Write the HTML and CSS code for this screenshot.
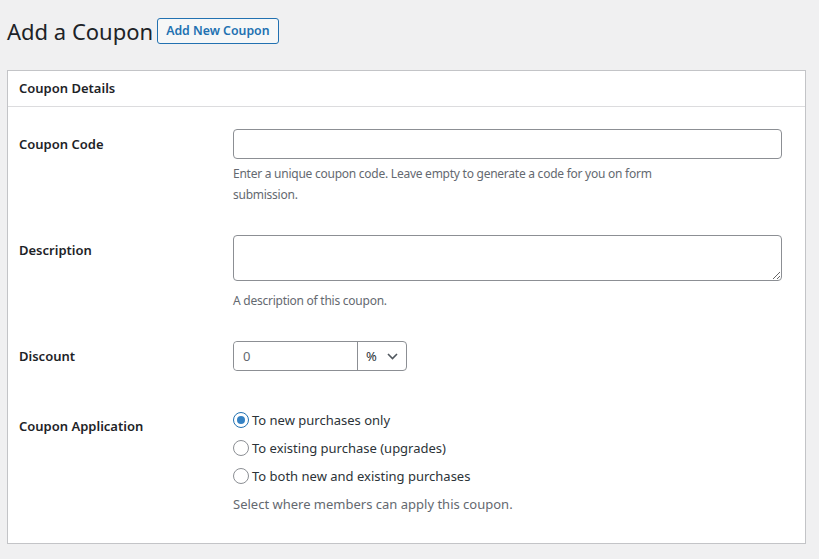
FILE: index.html
```html
<!DOCTYPE html>
<html lang="en">
<head>
    <meta charset="UTF-8">
    <meta name="viewport" content="width=device-width, initial-scale=1.0">
    <title>Add a Coupon</title>
    <link rel="stylesheet" href="styles.css">
</head>
<body>
    <div class="wrap">
        <div class="title-row">
            <h1>Add a Coupon</h1>
            <a href="#" class="title-action">Add New Coupon</a>
        </div>

        <div class="card">
            <h2 class="card-header">Coupon Details</h2>
            <div class="card-body">

                <!-- Coupon Code -->
                <div class="field-row">
                    <label class="field-label" for="couponCode">Coupon Code</label>
                    <div class="field-input">
                        <input type="text" id="couponCode" class="text-input">
                        <p class="description">Enter a unique coupon code. Leave empty to generate a code for you on form<br>submission.</p>
                    </div>
                </div>

                <!-- Description -->
                <div class="field-row">
                    <label class="field-label" for="couponDescription">Description</label>
                    <div class="field-input">
                        <textarea id="couponDescription" class="text-area"></textarea>
                        <p class="description">A description of this coupon.</p>
                    </div>
                </div>

                <!-- Discount -->
                <div class="field-row">
                    <label class="field-label" for="discountAmount">Discount</label>
                    <div class="field-input">
                        <div class="discount-group">
                            <input type="text" id="discountAmount" class="discount-amount" value="0">
                            <div class="discount-type">
                                <span>%</span>
                                <svg width="11" height="7" viewBox="0 0 11 7"><path d="M1 1l4.5 4.5L10 1" fill="none" stroke="#50575e" stroke-width="1.6"/></svg>
                            </div>
                        </div>
                    </div>
                </div>

                <!-- Coupon Application -->
                <div class="field-row">
                    <span class="field-label field-label-radio">Coupon Application</span>
                    <div class="field-input">
                        <fieldset class="radio-list">
                            <label class="radio-option"><input type="radio" name="application" value="new" checked> To new purchases only</label>
                            <label class="radio-option"><input type="radio" name="application" value="existing"> To existing purchase (upgrades)</label>
                            <label class="radio-option"><input type="radio" name="application" value="both"> To both new and existing purchases</label>
                        </fieldset>
                        <p class="description description-large">Select where members can apply this coupon.</p>
                    </div>
                </div>

            </div>
        </div>
    </div>
</body>
</html>
```

FILE: styles.css
```css
body {
    margin: 0;
    padding: 0;
    background-color: #f0f0f1;
    font-family: "Noto Sans", sans-serif;
    font-size: 13px;
    color: #1d2327;
}
.wrap {
    padding: 16px 13px 0 7px;
}
.title-row {
    display: flex;
    align-items: center;
    gap: 4px;
    margin-bottom: 24px;
}
h1 {
    font-size: 22px;
    font-weight: 400;
    line-height: 30px;
    margin: 0;
    color: #1d2327;
}
.title-action {
    display: inline-block;
    padding: 4px 8px;
    font-size: 12.3px;
    font-weight: 600;
    line-height: 16px;
    color: #2271b1;
    background-color: #f6f7f7;
    border: 1px solid #2271b1;
    border-radius: 3px;
    text-decoration: none;
}
.card {
    background-color: #fff;
    border: 1px solid #c3c4c7;
}
.card-header {
    margin: 0;
    padding: 8px 11px;
    font-size: 13px;
    font-weight: 600;
    line-height: 19px;
    border-bottom: 1px solid #dcdcde;
}
.card-body {
    padding: 7px 12px 13px 11px;
}
.field-row {
    display: flex;
}
.field-label {
    width: 214px;
    flex-shrink: 0;
    padding-top: 20px;
    font-weight: 600;
    line-height: 20px;
}
.field-label-radio {
    padding-top: 30px;
}
.field-input {
    flex: 1;
    padding: 15px 11px 15px 0;
}
.text-input, .text-area, .discount-group {
    box-sizing: border-box;
    border: 1px solid #8c8f94;
    border-radius: 4px;
    background-color: #fff;
}
.text-input {
    display: block;
    width: 100%;
    height: 30px;
    padding: 0 8px;
    font: inherit;
}
.text-area {
    display: block;
    width: 100%;
    height: 46px;
    padding: 2px 6px;
    font: inherit;
    margin-bottom: 9px;
}
.description {
    margin: 4px 0 0;
    font-size: 12px;
    letter-spacing: -0.25px;
    color: #646970;
    line-height: 21px;
}
.description-large {
    font-size: 13px;
    letter-spacing: 0;
}
.discount-group {
    display: flex;
    width: 174px;
    height: 30px;
}
.discount-amount {
    width: 124px;
    box-sizing: border-box;
    border: none;
    border-right: 1px solid #8c8f94;
    border-radius: 4px 0 0 4px;
    padding: 0 9px;
    font: inherit;
    color: #646970;
}
.discount-type {
    flex: 1;
    display: flex;
    align-items: center;
    gap: 10px;
    padding-left: 8px;
    color: #2c3338;
}
.radio-list {
    border: none;
    margin: 0;
    padding: 5px 0 0;
}
.radio-option {
    display: flex;
    align-items: center;
    gap: 3px;
    height: 28px;
    color: #2c3338;
}
.radio-option input {
    appearance: none;
    width: 16px;
    height: 16px;
    margin: 0;
    border: 1px solid #8c8f94;
    border-radius: 50%;
    background-color: #fff;
    display: flex;
    align-items: center;
    justify-content: center;
}
.radio-option input:checked {
    border-color: #2271b1;
}
.radio-option input:checked::before {
    content: "";
    width: 8px;
    height: 8px;
    border-radius: 50%;
    background-color: #3582c4;
}
.radio-list + .description {
    margin-top: 4px;
}
```
